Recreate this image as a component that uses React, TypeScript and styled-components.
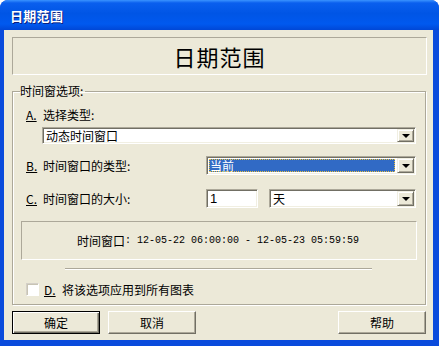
import React from "react";
import styled, { createGlobalStyle } from "styled-components";

const Global = createGlobalStyle`
  html, body { margin: 0; padding: 0; background: #ffffff; }
  body { font-family: "Noto Sans CJK SC", "Liberation Sans", sans-serif; font-size: 12px; }
`;

const Window = styled.div`
  width: 439px;
  height: 346px;
  display: flex;
  flex-direction: column;
  background: #0a4bdc;
  border-radius: 8px 8px 0 0;
  overflow: hidden;
  box-sizing: border-box;
`;

const TitleBar = styled.div`
  flex: none;
  height: 30px;
  display: flex;
  align-items: center;
  padding-left: 10px;
  background: linear-gradient(
    to bottom,
    #3a93ff 0%,
    #0a5fee 10%,
    #0055e5 45%,
    #0059ef 80%,
    #0047d6 100%
  );
  color: #ffffff;
  font-weight: bold;
  font-size: 13px;
  letter-spacing: 0.3px;
  text-shadow: 1px 1px 0 #0a1f80;
`;

const Client = styled.div`
  flex: 1;
  margin: 0 6px 6px 4px;
  background: #ece9d8;
  display: flex;
  flex-direction: column;
  padding: 7px 6px 0 8px;
  color: #000;
`;

const Header = styled.div`
  height: 38px;
  box-sizing: border-box;
  border: 1px solid;
  border-color: #aca899 #ffffff #ffffff #aca899;
  display: flex;
  align-items: center;
  justify-content: center;
  font-size: 22px;
  letter-spacing: 1px;
`;

const Group = styled.fieldset`
  margin: 9px 1px 0 0;
  padding: 0;
  min-width: 0;
  border: 1px solid #aca899;
  box-shadow: inset 1px 1px 0 #ffffff, 1px 1px 0 #ffffff;
`;

const Legend = styled.legend`
  margin-left: 7px;
  padding: 0 2px 0 0;
  font-size: 12px;
  line-height: 14px;
`;

const GroupBody = styled.div`
  display: flex;
  flex-direction: column;
  padding: 10px 8px 8px 8px;
`;

const LabelLine = styled.div`
  height: 14px;
  line-height: 14px;
  margin-left: 5px;
  display: flex;
  gap: 5px;
`;

const Key = styled.span`
  text-decoration: underline;
  display: inline-block;
  width: 12px;
`;

const Combo = styled.div<{ $ml?: number; $mt?: number; $mr?: number }>`
  height: 19px;
  box-sizing: border-box;
  margin-top: ${(p) => p.$mt ?? 0}px;
  margin-left: ${(p) => p.$ml ?? 0}px;
  margin-right: ${(p) => p.$mr ?? 0}px;
  flex: 1;
  background: #ffffff;
  border: 1px solid;
  border-color: #aca899 #ffffff #ffffff #aca899;
  box-shadow: inset 1px 1px 0 #716f64, inset -1px -1px 0 #f1efe2;
  display: flex;
  align-items: stretch;
  padding: 1px;
`;

const ComboText = styled.div<{ $selected?: boolean }>`
  flex: 1;
  display: flex;
  align-items: center;
  padding-left: 2px;
  line-height: 13px;
  font-size: 12px;
  margin: ${(p) => (p.$selected ? "1px 2px 1px 1px" : "0")};
  ${(p) =>
    p.$selected &&
    `background: #316ac5; color: #ffffff; outline: 1px dotted #e8c040; outline-offset: -1px; padding-left: 1px;`}
`;

const DropButton = styled.div`
  flex: none;
  width: 17px;
  box-sizing: border-box;
  background: #ece9d8;
  border: 1px solid;
  border-color: #f1efe2 #716f64 #716f64 #f1efe2;
  box-shadow: inset 1px 1px 0 #ffffff, inset -1px -1px 0 #aca899;
  display: flex;
  align-items: center;
  justify-content: center;
`;

const Arrow = styled.div`
  width: 0;
  height: 0;
  border-left: 4px solid transparent;
  border-right: 4px solid transparent;
  border-top: 4px solid #000;
  margin-top: 1px;
`;

const Row = styled.div<{ $mt: number }>`
  display: flex;
  align-items: center;
  height: 19px;
  margin-top: ${(p) => p.$mt}px;
  margin-left: 5px;
  margin-right: 1px;
`;

const RowLabel = styled.div`
  width: 180px;
  flex: none;
  display: flex;
  gap: 5px;
  line-height: 14px;
`;

const TextInput = styled.div`
  width: 52px;
  height: 19px;
  box-sizing: border-box;
  flex: none;
  background: #ffffff;
  border: 1px solid;
  border-color: #aca899 #ffffff #ffffff #aca899;
  box-shadow: inset 1px 1px 0 #716f64, inset -1px -1px 0 #f1efe2;
  display: flex;
  align-items: center;
  padding-left: 3px;
  font-family: "Liberation Sans", sans-serif;
  font-size: 13px;
`;

const TimeBox = styled.div`
  margin-top: 13px;
  height: 39px;
  box-sizing: border-box;
  border: 1px solid;
  border-color: #aca899 #ffffff #ffffff #aca899;
  display: flex;
  align-items: center;
  justify-content: center;
  padding-right: 2px;
`;

const Mono = styled.span`
  font-family: "Liberation Mono", "DejaVu Sans Mono", monospace;
  font-size: 10px;
  white-space: pre;
`;

const Separator = styled.div`
  margin: 8px 0 0 44px;
  width: 307px;
  height: 1px;
  background: #aca899;
  border-bottom: 1px solid #ffffff;
`;

const CheckRow = styled.div`
  margin: 13px 0 0 5px;
  display: flex;
  align-items: center;
  height: 13px;
  line-height: 14px;
`;

const CheckBox = styled.div`
  width: 13px;
  height: 13px;
  box-sizing: border-box;
  background: #ffffff;
  border: 1px solid;
  border-color: #d4d0c8 #ffffff #ffffff #d4d0c8;
  box-shadow: inset 1px 1px 0 #c8c4b4;
  margin-right: 5px;
`;

const CheckText = styled.span`
  margin-left: 6px;
`;

const Buttons = styled.div`
  margin-top: 6px;
  display: flex;
  gap: 8px;
  margin-right: 1px;
`;

const Button = styled.div<{ $default?: boolean; $push?: boolean }>`
  width: 88px;
  height: 23px;
  box-sizing: border-box;
  display: flex;
  align-items: center;
  justify-content: center;
  background: #ece9d8;
  ${(p) => (p.$push ? "margin-left: auto;" : "")}
  ${(p) =>
    p.$default
      ? `border: 1px solid #000000; box-shadow: inset 1px 1px 0 #ffffff, inset -1px -1px 0 #716f64, inset -2px -2px 0 #aca899;`
      : `border: 1px solid; border-color: #ffffff #716f64 #716f64 #ffffff; box-shadow: inset -1px -1px 0 #aca899;`}
`;

const DropDown = ({ text, selected }: { text: string; selected?: boolean }) => (
  <>
    <ComboText $selected={selected}>{text}</ComboText>
    <DropButton>
      <Arrow />
    </DropButton>
  </>
);

export default function App() {
  return (
    <>
      <Global />
      <Window>
        <TitleBar>日期范围</TitleBar>
        <Client>
          <Header>日期范围</Header>
          <Group>
            <Legend>时间窗选项:</Legend>
            <GroupBody>
              <LabelLine>
                <Key>A.</Key>
                <span>选择类型:</span>
              </LabelLine>
              <Combo $mt={5} $ml={21} $mr={1}>
                <DropDown text="动态时间窗口" />
              </Combo>
              <Row $mt={12}>
                <RowLabel>
                  <Key>B.</Key>
                  <span>时间窗口的类型:</span>
                </RowLabel>
                <Combo>
                  <DropDown text="当前" selected />
                </Combo>
              </Row>
              <Row $mt={14}>
                <RowLabel>
                  <Key>C.</Key>
                  <span>时间窗口的大小:</span>
                </RowLabel>
                <TextInput>1</TextInput>
                <Combo $ml={11}>
                  <DropDown text="天" />
                </Combo>
              </Row>
              <TimeBox>
                <span>时间窗口</span>
                <Mono>: 12-05-22 06:00:00 - 12-05-23 05:59:59</Mono>
              </TimeBox>
              <Separator />
              <CheckRow>
                <CheckBox />
                <Key>D.</Key>
                <CheckText>将该选项应用到所有图表</CheckText>
              </CheckRow>
            </GroupBody>
          </Group>
          <Buttons>
            <Button $default>确定</Button>
            <Button>取消</Button>
            <Button $push>帮助</Button>
          </Buttons>
        </Client>
      </Window>
    </>
  );
}
